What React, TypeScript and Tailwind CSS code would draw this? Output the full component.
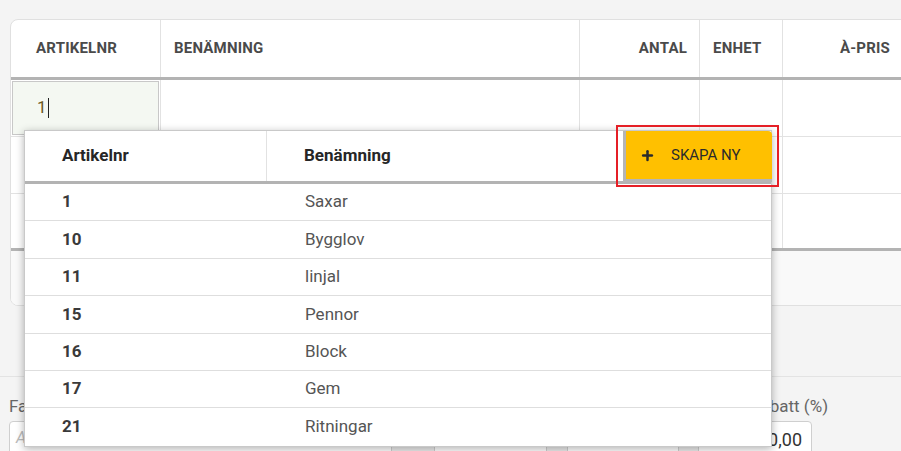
import { Plus } from "lucide-react";

const font = { fontFamily: "Roboto, 'Noto Sans', Arial, sans-serif" };

const items = [
  { nr: "1", name: "Saxar" },
  { nr: "10", name: "Bygglov" },
  { nr: "11", name: "linjal" },
  { nr: "15", name: "Pennor" },
  { nr: "16", name: "Block" },
  { nr: "17", name: "Gem" },
  { nr: "21", name: "Ritningar" },
];

const headCls = "text-[15px] font-bold tracking-[0.2px] text-[#4a4a4a] uppercase";

function TableRow({ first }: { first?: boolean }) {
  return (
    <div className="flex h-[57px] border-b border-[#e2e2e2]">
      <div className="w-[150px] shrink-0 border-r border-[#e2e2e2] p-[1px]">
        {first && (
          <div className="h-full border border-[#c8c8c8] bg-[#f4f8f2] flex items-center pl-[24px] text-[17px] text-[#6b5a1e]">
            1<span className="ml-[1px] inline-block w-[1px] h-[20px] bg-[#222]" />
          </div>
        )}
      </div>
      <div className="w-[419px] shrink-0 border-r border-[#e2e2e2]" />
      <div className="w-[120px] shrink-0 border-r border-[#e2e2e2]" />
      <div className="w-[83px] shrink-0 border-r border-[#e2e2e2]" />
      <div className="flex-1" />
    </div>
  );
}

export default function App() {
  return (
    <div className="relative h-[451px] w-[901px] overflow-hidden bg-[#f4f4f4]" style={font}>
      {/* invoice lines card */}
      <div className="ml-[10px] mt-[19px] w-[920px] rounded-l-lg border border-[#e0e0e0] bg-white overflow-hidden">
        <div className="flex h-[60px] border-b-[3px] border-[#b3b3b3]">
          <div className={"w-[150px] shrink-0 border-r border-[#e2e2e2] flex items-center pl-[25px] " + headCls}>Artikelnr</div>
          <div className={"w-[419px] shrink-0 border-r border-[#e2e2e2] flex items-center pl-[13px] " + headCls}>Benämning</div>
          <div className={"w-[120px] shrink-0 border-r border-[#e2e2e2] flex items-center justify-end pr-[12px] " + headCls}>Antal</div>
          <div className={"w-[83px] shrink-0 border-r border-[#e2e2e2] flex items-center pl-[13px] " + headCls}>Enhet</div>
          <div className={"w-[119px] shrink-0 flex items-center justify-end pr-[12px] " + headCls}>À-pris</div>
          <div className="flex-1" />
        </div>
        <TableRow first />
        <TableRow />
        <div className="flex h-[57px] border-b-[3px] border-[#b3b3b3]">
          <div className="w-[150px] shrink-0 border-r border-[#e2e2e2]" />
          <div className="w-[419px] shrink-0 border-r border-[#e2e2e2]" />
          <div className="w-[120px] shrink-0 border-r border-[#e2e2e2]" />
          <div className="w-[83px] shrink-0 border-r border-[#e2e2e2]" />
          <div className="flex-1" />
        </div>
        <div className="h-[54px] bg-[#f9f9f9]" />
      </div>

      <div className="mt-[70px] border-t border-[#e3e3e3]" />

      {/* totals row */}
      <div className="flex pl-[9px] pt-[17px] text-[17px] text-[#666]">
        <div className="w-[383px]">Faktura</div>
        <div className="flex-1 pl-[358px]">Rabatt (%)</div>
      </div>
      <div className="flex pl-[9px] pt-[1px]">
        <div className="h-[40px] w-[383px] rounded-tl-sm border border-[#cfcfcf] bg-white pl-[6px] pt-[4px] text-[16px] italic text-[#bbb]">Ange</div>
        <div className="h-[40px] w-[42px] border-y border-[#cfcfcf] bg-[#ececec]" />
        <div className="h-[40px] w-[113px] border border-[#cfcfcf] bg-white pr-[30px] pt-[4px] text-right text-[#999]">'</div>
        <div className="h-[40px] w-[20px] border-y border-[#cfcfcf] bg-[#ececec]" />
        <div className="h-[40px] w-[112px] border border-[#cfcfcf] bg-white pr-[30px] pt-[4px] text-right text-[#999]">'</div>
        <div className="h-[40px] w-[19px] border-y border-[#cfcfcf] bg-[#ececec]" />
        <div className="h-[40px] w-[114px] rounded-tr-sm border border-[#cfcfcf] bg-white pr-[9px] pt-[4px] text-right text-[18px] text-[#333]">0,00</div>
      </div>

      {/* article dropdown */}
      <div className="absolute left-[24px] top-[130px] w-[748px] border border-[#c9c9c9] bg-white shadow-[0_2px_8px_rgba(0,0,0,0.3)]">
        <div className="flex h-[53px] border-b-[3px] border-[#b3b3b3] text-[17px] font-bold text-[#262626]">
          <div className="w-[242px] border-r border-[#e2e2e2] flex items-center pl-[37px]">Artikelnr</div>
          <div className="flex-1 flex items-center pl-[37px]">Benämning</div>
        </div>
        {items.map((it, i) => (
          <div
            key={it.nr}
            className={"flex h-[37.4px] items-center text-[17px] " + (i < items.length - 1 ? "border-b border-[#dedede]" : "")}
          >
            <div className="w-[242px] pl-[37px] font-bold text-[#3a3a3a]">{it.nr}</div>
            <div className="flex-1 pl-[38px] text-[#555]">{it.name}</div>
          </div>
        ))}
      </div>

      {/* create new button, highlighted */}
      <div className="absolute left-[616px] top-[125px] h-[62px] w-[163px] border-2 border-[#e51f26]" />
      <button
        type="button"
        className="absolute left-[623px] top-[131px] flex h-[51px] w-[149px] items-center rounded-tr-[4px] border-b-[3px] border-l-[3px] border-[#b5b5b5] bg-[#ffc000] pl-[14px] text-[15px] text-[#2b2b2b]"
      >
        <Plus className="h-[15px] w-[15px]" strokeWidth={4} />
        <span className="ml-[16px]">SKAPA NY</span>
      </button>
    </div>
  );
}
